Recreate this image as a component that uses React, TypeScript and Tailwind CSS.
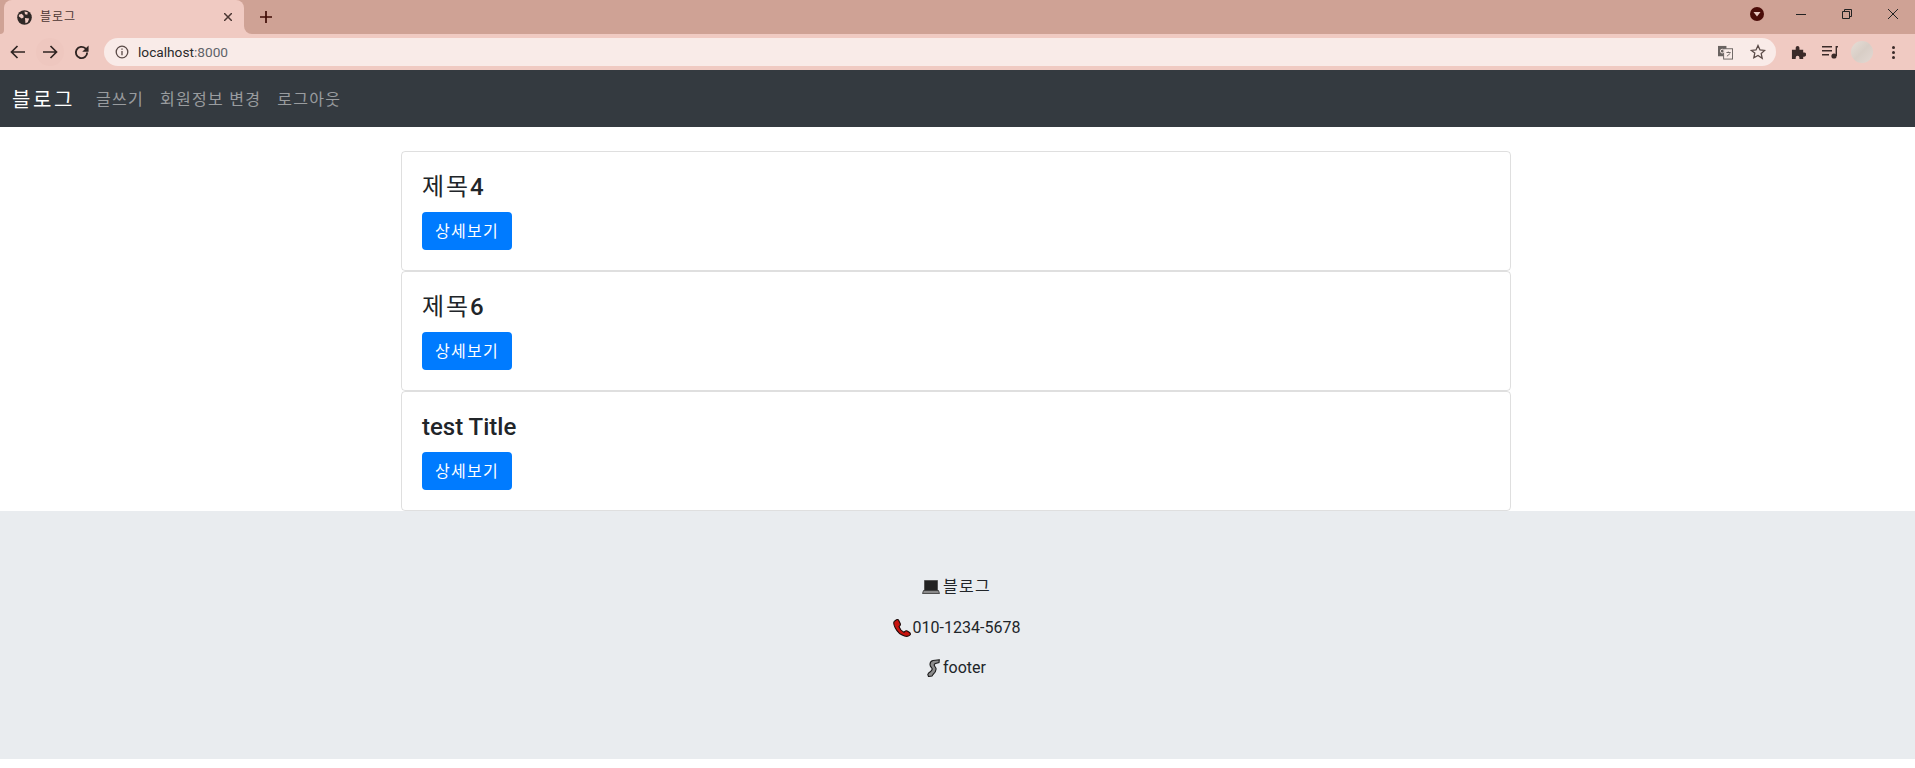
import React from 'react';

const font = { fontFamily: 'Roboto, "Noto Sans CJK KR", sans-serif' };

const posts = [
  { hangul: '제목', rest: '4' },
  { hangul: '제목', rest: '6' },
  { hangul: '', rest: 'test Title' },
];

const Arrow = ({ flip }: { flip?: boolean }) => (
  <svg width="15" height="14" viewBox="0 0 15 14" className={flip ? 'rotate-180' : ''} fill="none" stroke="#2f2422" strokeWidth="1.7">
    <path d="M15 7H1.5M7.5 1 1.5 7l6 6" />
  </svg>
);

const BrowserChrome = () => (
  <div className="h-[70px] bg-[#cfa295] shrink-0">
    {/* tab strip */}
    <div className="h-[34px] flex items-end pl-1">
      <div className="relative w-[240px] h-[34px] bg-[#f0cac2] rounded-t-lg flex items-center pl-[13px] pr-[12px]">
        <div className="absolute -left-[4px] bottom-0 w-[4px] h-[4px] bg-[#f0cac2]">
          <div className="w-full h-full bg-[#cfa295] rounded-br-[4px]" />
        </div>
        <div className="absolute -right-[8px] bottom-0 w-[8px] h-[8px] bg-[#f0cac2]">
          <div className="w-full h-full bg-[#cfa295] rounded-bl-[8px]" />
        </div>
        <svg width="15" height="15" viewBox="0 0 16 16">
          <circle cx="8" cy="8" r="7.8" fill="#2f2826" />
          <path d="M2 5l3-1 2 2 0 2-2 1-3-2zM8 1.5l3.5 1-.5 2.5-2.5-.5zM8.5 8.5l4.5.5-1.5 4-2.5 1z" fill="#f0cac2" />
        </svg>
        <span className="ml-[8px] text-[12px] tracking-[0.08em] text-[#4a3632]">블로그</span>
        <svg className="ml-auto" width="8" height="8" viewBox="0 0 8 8" stroke="#4a3632" strokeWidth="1.5"><path d="M0 0l8 8M8 0L0 8" /></svg>
      </div>
      <svg className="ml-[16px] mb-[11px]" width="12" height="12" viewBox="0 0 12 12" stroke="#3f0b05" strokeWidth="1.7"><path d="M6 0v12M0 6h12" /></svg>
      {/* window controls */}
      <div className="ml-auto flex items-center h-[34px] self-start -mt-[3px]">
        <svg width="14" height="14" viewBox="0 0 14 14"><circle cx="7" cy="7" r="7" fill="#4a0c08" /><path d="M3.5 5h7L7 9.5z" fill="#e8c7c0" /></svg>
        <svg className="ml-[32px]" width="10" height="10" viewBox="0 0 10 10" stroke="#222"><path d="M0 5.5h10" /></svg>
        <svg className="ml-[36px]" width="10" height="10" viewBox="0 0 10 10" fill="none" stroke="#222"><path d="M.5 2.5h7v7h-7zM2.5 2.5v-2h7v7h-2" /></svg>
        <svg className="ml-[36px] mr-[17px]" width="10" height="10" viewBox="0 0 10 10" stroke="#222"><path d="M0 0l10 10M10 0L0 10" /></svg>
      </div>
    </div>
    {/* toolbar */}
    <div className="h-[36px] bg-[#f0cac2] flex items-center">
      <div className="w-[35px] flex justify-center"><Arrow /></div>
      <div className="w-[28px] h-[28px] ml-[1px] rounded-full bg-[#eec7bf] flex items-center justify-center"><Arrow flip /></div>
      <div className="w-[34px] flex justify-center">
        <svg width="17" height="17" viewBox="0 0 24 24" fill="none" stroke="#2f2422" strokeWidth="2.6">
          <path d="M20 12a8 8 0 1 1-2.4-5.7L20 9" />
          <path d="M22 2v9h-9z" fill="#2f2422" stroke="none" />
        </svg>
      </div>
      <div className="ml-[6px] w-[1672px] h-[28px] rounded-full bg-[#f9ebe8] flex items-center pl-[11px]">
        <svg width="14" height="14" viewBox="0 0 14 14" fill="none" stroke="#5a4a47" strokeWidth="1.3">
          <circle cx="7" cy="7" r="5.8" />
          <path d="M7 6v4.2M7 3.6v1.2" />
        </svg>
        <span className="ml-[9px] text-[13.7px] text-[#2a2a2a]">localhost<span className="text-[#5f6368]">:8000</span></span>
        <svg className="ml-auto" width="15" height="15" viewBox="0 0 16 16">
          <rect x="0" y="1" width="9" height="11" fill="#6a6361" />
          <rect x="6" y="4" width="9.5" height="11" fill="#f9ebe8" stroke="#6a6361" />
          <circle cx="4.5" cy="6.5" r="2" fill="none" stroke="#f9ebe8" />
          <path d="M9 8h4.5M11 7v1M9.5 12l3.5-3" stroke="#6a6361" fill="none" />
        </svg>
        <svg className="ml-[17px] mr-[10px]" width="16" height="16" viewBox="0 0 16 16" fill="none" stroke="#5a4a47" strokeWidth="1.3">
          <path d="M8 1.5l2 4.4 4.7.5-3.5 3.2 1 4.7L8 11.5l-4.2 2.3 1-4.7L1.3 6.4 6 5.9z" />
        </svg>
      </div>
      <svg className="ml-[15px]" width="15" height="15" viewBox="0 0 16 16" fill="#3a2a28">
        <path d="M1 5h4V3a2 2 0 0 1 4 0v2h4v3h1a2.2 2.2 0 0 1 0 4.4h-1V15H9v-1.5a2 2 0 0 0-4 0V15H1z" />
      </svg>
      <svg className="ml-[16px]" width="17" height="14" viewBox="0 0 17 14" fill="#3a2a28">
        <path d="M0 1h10v1.4H0zM0 5h10v1.4H0zM0 9h7v1.4H0z" />
        <circle cx="12" cy="11" r="2.6" />
        <path d="M13.6 1H16v1.6h-1V11h-1.4z" />
      </svg>
      <div className="ml-[12px] w-[22px] h-[22px] rounded-full bg-gradient-to-br from-[#e6ddd6] via-[#d8cec6] to-[#e2d9d3]" />
      <div className="ml-[19px] flex flex-col gap-[2px]">
        <span className="w-[3px] h-[3px] rounded-full bg-[#3a2a28]" />
        <span className="w-[3px] h-[3px] rounded-full bg-[#3a2a28]" />
        <span className="w-[3px] h-[3px] rounded-full bg-[#3a2a28]" />
      </div>
    </div>
  </div>
);

const LaptopIcon = () => (
  <svg width="18" height="14" viewBox="0 0 18 14">
    <path d="M2.5.5h13v10h-13z" fill="#222" stroke="#555" />
    <path d="M1.5 10.5h15l1 3H.5z" fill="#8a8a8a" stroke="#333" strokeWidth=".8" />
  </svg>
);

const PhoneIcon = () => (
  <svg width="18" height="18" viewBox="0 0 18 18">
    <path
      d="M3.5.8 1.3 2.4C.4 3.4.8 6 2.2 8.8 4 12.4 7.6 16 11.5 17c2 .5 4.5.5 5.7-1.200.5-.9-.1-1.900-1-2.500l-2-1.300c-.9-.5-1.800-.2-2.400.5l-.9.8C9 12.300 6.600 9.500 6 7.600l.9-1C7.500 6 7.500 5 7.100 4.200L5.600 1.300C5.200.5 4.200.3 3.500.8z"
      fill="#c8140f"
      stroke="#1a0b0b"
      strokeWidth="1.1"
    />
  </svg>
);

const LegIcon = () => (
  <svg width="13" height="18" viewBox="0 0 13 18">
    <path
      d="M12.300.8 6 1.500C3.800 2 3 3.500 3 5.500c0 2 1.500 3 2.200 4.200.3 1.500-1.500 3-3.500 4.300L.8 15.500 1.500 17.500 5 17l1-1.500c1.500-1.500 3.500-3.500 3-6-.4-1.500-1.800-2.200-1.800-3.500 0-.8.6-1.200 1.300-1.500l3.500-.9z"
      fill="#8c8c8c"
      stroke="#1c1c1c"
      strokeWidth="1.1"
    />
  </svg>
);

export default function App() {
  return (
    <div className="min-h-[768px] bg-white flex flex-col" style={font}>
      <BrowserChrome />

      {/* Navbar */}
      <nav className="h-[57px] bg-[#343a40] flex items-center pl-[12px] pt-[2px] shrink-0 tracking-[0.08em]">
        <a className="text-[20px] tracking-[0.13em] text-white mr-[13px]">블로그</a>
        <ul className="flex">
          <li className="px-[8px] text-[16px] text-[#ffffff80]">글쓰기</li>
          <li className="px-[8px] text-[16px] text-[#ffffff80]">회원정보 변경</li>
          <li className="px-[8px] text-[16px] text-[#ffffff80]">로그아웃</li>
        </ul>
      </nav>

      {/* Post list */}
      <div className="w-[1110px] ml-[401px] mt-[24px]">
        {posts.map((post) => (
          <div key={post.hangul + post.rest} className="h-[120px] border border-[#00000020] rounded-[4px] px-[20px] pt-[21px]">
            <h4 className="text-[24px] leading-[29px] text-[#212529] mb-[10px]">
              {post.hangul && <span className="tracking-[0.08em]">{post.hangul}</span>}
              <span className="font-medium">{post.rest}</span>
            </h4>
            <button className="h-[38px] w-[90px] pt-[2px] bg-[#007bff] text-white text-[16px] tracking-[0.08em] rounded-[4px]">상세보기</button>
          </div>
        ))}
      </div>

      {/* Footer */}
      <footer className="h-[248px] bg-[#e9ecef] flex flex-col items-center pt-[64px] pr-[2px] text-[16px] text-[#212529]">
        <p className="h-[24px] leading-[24px] mb-[17px] flex items-center gap-[3px]">
          <LaptopIcon />
          <span className="tracking-[0.08em]">블로그</span>
        </p>
        <p className="h-[24px] leading-[24px] mb-[16px] flex items-center gap-[2px]">
          <PhoneIcon />
          010-1234-5678
        </p>
        <p className="h-[24px] leading-[24px] flex items-center gap-[3px]">
          <LegIcon />
          footer
        </p>
      </footer>
    </div>
  );
}
